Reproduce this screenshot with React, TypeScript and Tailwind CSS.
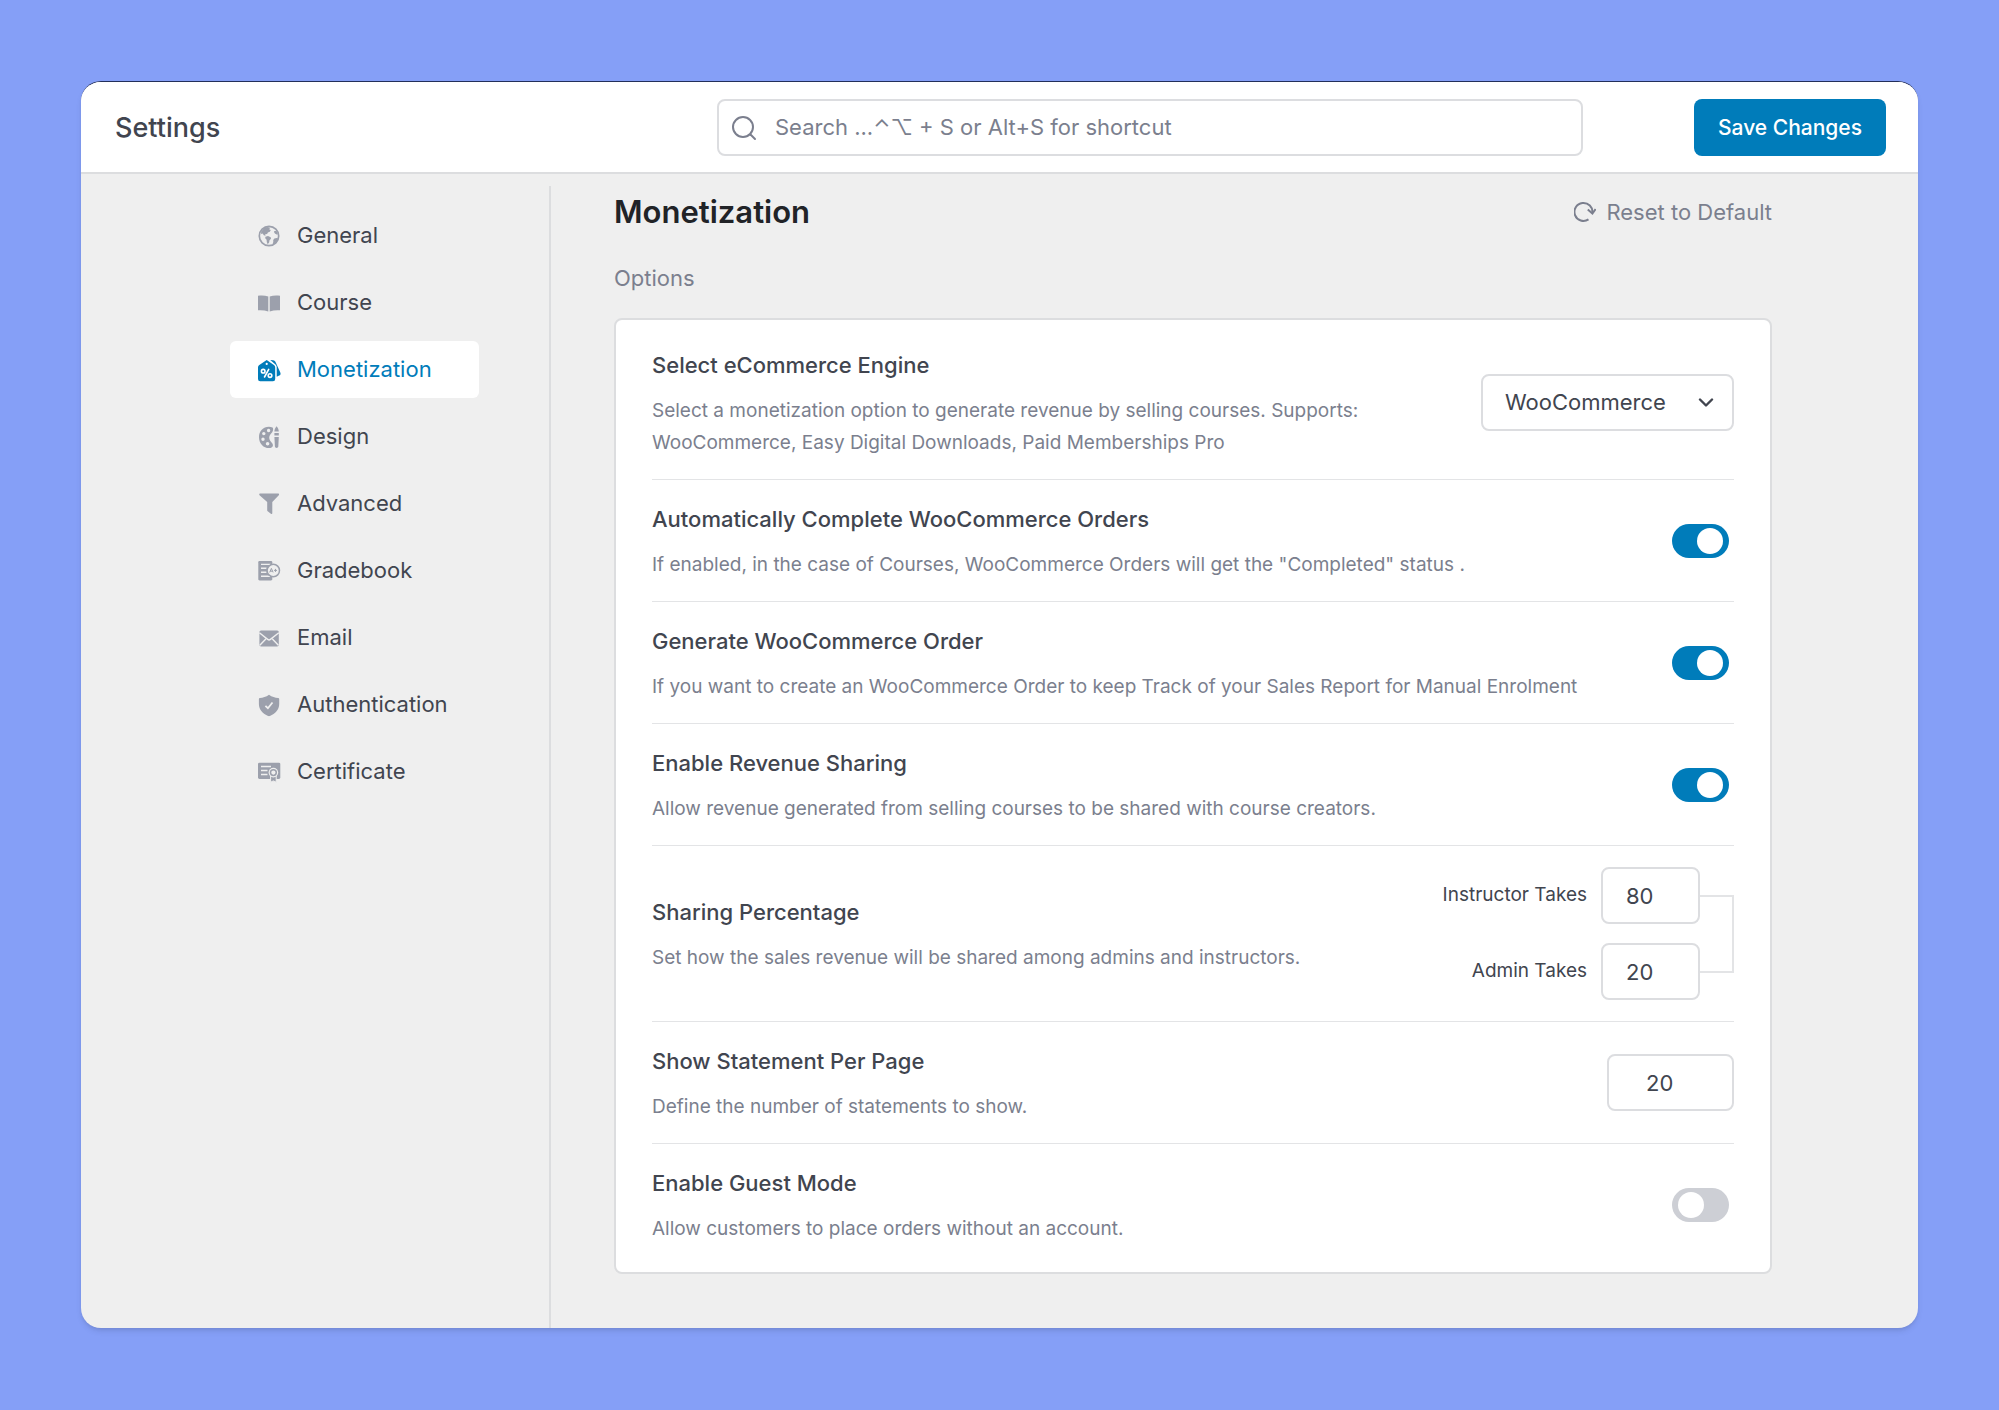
import React, { useState } from "react";
import { clsx } from "clsx";

interface IconProps {
  children: React.ReactNode;
}

const Icon: React.FC<IconProps> = ({ children }) => (
  <svg
    width="24"
    height="24"
    viewBox="0 0 24 24"
    fill="currentColor"
    className="shrink-0"
    aria-hidden="true"
  >
    {children}
  </svg>
);

const GlobeIcon = () => (
  <Icon>
    <circle cx="12" cy="12" r="9.7" fill="none" stroke="currentColor" strokeWidth="1.7" />
    <path d="M4.200 7.400 7.200 4l3.400-1 2.400.8-.7 1.600 1.500.7-1 1.700-1.900.6-.8 1.500-1.900.4.3 1.400-1.600-.4L5.600 9.400 4 10Z" />
    <path d="M8.400 12.800 11 12.100l2.700 1.200.3 1.500-1.500 1.400-.4 2.200-1.400 1.800-.9-2.200-.2-2.200-1.400-1.600Z" />
    <path d="m17.400 6.900 2.100.2 1.600 3.100-1.500.3-1.700-1.100-.9-1.400ZM17.400 14.600l2.300-.7 1.400.3-1.300 3.300-3 2.800-1.200-.4.700-1.800-.1-2Z" />
  </Icon>
);

const BookIcon = () => (
  <Icon>
    <path d="M1 4.800c3.600-.6 7-.4 10.300.7v15C8.200 19.400 4.800 19 1 19.300Z" />
    <path d="M23 4.800c-3.600-.6-7-.4-10.300.7v15c3.100-1.100 6.500-1.500 10.300-1.200Z" />
  </Icon>
);

const TagIcon = () => (
  <Icon>
    <path
      fillRule="evenodd"
      d="M9.700 1.900 16.900 7c.9.700 1.300 1.500 1.300 2.600v11.500a2.200 2.200 0 0 1-2.200 2.200H3.200A2.200 2.200 0 0 1 1 21.100V9.600C1 8.500 1.400 7.700 2.300 7Zm0 2.900a1.100 1.100 0 1 0 0 2.200 1.100 1.100 0 0 0 0-2.200Z"
    />
    <path d="m13.200 1.900 3 .4c1 .1 1.700.6 2.200 1.500l4.900 10.600c.6 1.400.2 2.600-1.100 3.200l-2.500 1.100V9.400c0-1.500-.6-2.500-1.800-3.400Z" />
    <g fill="none" stroke="#fff" strokeWidth="1.600" strokeLinecap="round">
      <circle cx="6.200" cy="13.200" r="1.800" />
      <circle cx="13" cy="17.600" r="1.800" />
      <path d="m11.700 11.400-4.200 7.600" />
    </g>
  </Icon>
);

const PaletteIcon = () => (
  <Icon>
    <path
      fillRule="evenodd"
      d="M15.600 2.400C8 0 2 5.200 2 12.200s5.400 11.600 11.200 10.800c2.800-.5 3.400-2.900 2-4.800-1.300-1.700-3-3-3-5.400 0-2.700 1.600-3.700 3-5.600 1-1.500 1.300-3.600.4-4.800ZM11.600 3.800a1.700 1.700 0 1 0 0 3.400 1.700 1.700 0 0 0 0-3.400ZM6.800 6.900a1.700 1.700 0 1 0 0 3.400 1.700 1.700 0 0 0 0-3.400ZM6 12.600a1.700 1.700 0 1 0 0 3.400 1.700 1.700 0 0 0 0-3.400Zm4.600 4.400a1.800 1.800 0 1 0 0 3.600 1.800 1.800 0 0 0 0-3.600Z"
    />
    <path d="M19.600 1.300c1.400 1.800 2.200 3.300 2.200 5.300h-4.400c0-2 .8-3.500 2.200-5.300ZM17.400 8h4.400v2.400h-4.400ZM17.400 12h4.400l-.5 9.500c-.1 1.900-3.300 1.900-3.400 0Z" />
  </Icon>
);

const FunnelIcon = () => (
  <Icon>
    <path d="M3.200 1.600h17.900c.9 0 1.300 1 .7 1.700L15.300 10v11.300c0 .6-.6.9-1.100.6l-3.500-2.600a1 1 0 0 1-.5-.9V10L2.500 3.300C1.900 2.600 2.300 1.600 3.200 1.600Z" />
  </Icon>
);

const GradebookIcon = () => (
  <Icon>
    <path d="M2.600 2h11.200c.8 0 1.500.5 1.500 1.300v17c0 .6-.6 1.100-1.300 1.100H2.600c-.8 0-1.300-.5-1.300-1.200V3.200C1.300 2.500 1.800 2 2.600 2Z" />
    <path d="M4 5.400h9.500M4 9.200h5.500M4 13.200h5.500M4 17.200h9" stroke="#efefef" strokeWidth="1.400" fill="none" />
    <circle cx="16.300" cy="11.500" r="6.200" fill="#efefef" stroke="currentColor" strokeWidth="1.500" />
    <path
      d="m12.700 13.400 1.700-4 1.700 4M13.300 12.200h2.200M17 11.400h3M18.500 9.900v3"
      fill="none"
      stroke="currentColor"
      strokeWidth="1"
    />
  </Icon>
);

const MailIcon = () => (
  <Icon>
    <rect x="2.400" y="4.400" width="19.400" height="16" rx="1.600" />
    <path
      d="m2.400 6.800 8.300 6.600c.9.700 1.800.7 2.700 0l8.400-6.600M2.800 19.200l6-6.300M21.400 19.200l-6-6.300"
      fill="none"
      stroke="#efefef"
      strokeWidth="1.400"
    />
  </Icon>
);

const ShieldIcon = () => (
  <Icon>
    <path d="M12 1.800c3 2.200 6 3 9.200 3.300.6.100 1 .4 1 1v5c0 5.600-4 10-9.300 11.900-.6.200-1.200.2-1.800 0C5.900 21.100 1.900 16.700 1.900 11.100v-5c0-.6.4-.9 1-1C6 4.800 9 4 12 1.800Z" />
    <path d="m8.400 12.800 2.500 2.400 4.600-5.700" fill="none" stroke="#efefef" strokeWidth="1.800" />
  </Icon>
);

const CertificateIcon = () => (
  <Icon>
    <rect x="1" y="2.700" width="22.300" height="16.300" rx="1.400" />
    <path d="M4 6.600h10M4 10.600h6.500M4 14.600h6.500" stroke="#efefef" strokeWidth="1.500" fill="none" />
    <path d="M13.600 15h5.600v7.200l-2.800-1.300-2.800 1.300Z" stroke="#efefef" strokeWidth="1" />
    <circle cx="16.400" cy="12.600" r="4.800" fill="#efefef" />
    <circle cx="16.400" cy="12.600" r="2.900" fill="#efefef" stroke="currentColor" strokeWidth="1.500" />
  </Icon>
);

const navItems = [
  { name: "General", icon: GlobeIcon },
  { name: "Course", icon: BookIcon },
  { name: "Monetization", icon: TagIcon },
  { name: "Design", icon: PaletteIcon },
  { name: "Advanced", icon: FunnelIcon },
  { name: "Gradebook", icon: GradebookIcon },
  { name: "Email", icon: MailIcon },
  { name: "Authentication", icon: ShieldIcon },
  { name: "Certificate", icon: CertificateIcon },
];

interface RowProps {
  title: string;
  description: string;
  htmlFor?: string;
  children: React.ReactNode;
}

const Row: React.FC<RowProps> = ({ title, description, htmlFor, children }) => (
  <div className="flex items-center justify-between gap-6 border-b border-[#e3e4e6] py-5 last:border-b-0">
    <div className="max-w-[940px] pt-1">
      <h3 className="text-[22px] leading-[30px] font-medium text-[#41454f]">
        {htmlFor ? <label htmlFor={htmlFor}>{title}</label> : title}
      </h3>
      <p className="mt-[15px] text-[19px] leading-8 whitespace-pre-line text-[#7b7f8e]">
        {description}
      </p>
    </div>
    {children}
  </div>
);

interface ToggleProps {
  id: string;
  defaultChecked?: boolean;
}

const Toggle: React.FC<ToggleProps> = ({ id, defaultChecked }) => (
  <input
    id={id}
    type="checkbox"
    role="switch"
    defaultChecked={defaultChecked}
    className="mr-[5px] h-[34px] w-[57px] shrink-0 cursor-pointer appearance-none rounded-full bg-[#cdcfd5] px-1.5 py-1 before:block before:size-[26px] before:rounded-full before:bg-white checked:bg-[#007cba] checked:before:ml-auto"
  />
);

const inputClass =
  "h-[57px] rounded-lg border-2 border-[#dcdde0] bg-white text-[22px] text-[#41454f] outline-none";

const App: React.FC = () => {
  const [active, setActive] = useState("Monetization");

  return (
    <div className="flex min-h-screen flex-col bg-[#859ff7] px-[81px] pt-[81px] pb-[82px] font-['Inter','Liberation_Sans',sans-serif]">
      <div className="flex flex-1 flex-col overflow-hidden rounded-[20px] border-t border-[#232f5a] bg-[#efefef] shadow-md">
        {/* Top bar */}
        <header className="grid grid-cols-[602fr_866fr_303fr] items-center border-b-2 border-[#dcdddf] bg-white pt-[17px] pr-8 pb-4 pl-[34px]">
          <h1 className="text-[27px] leading-8 font-medium text-[#41454f]">Settings</h1>
          <label className="flex h-[57px] items-center gap-[18px] rounded-lg border-2 border-[#dcdde0] bg-white px-3">
            <svg
              width="26"
              height="26"
              viewBox="0 0 26 26"
              fill="none"
              stroke="#7b7f8e"
              strokeWidth="2"
              strokeLinecap="round"
              className="shrink-0"
              aria-hidden="true"
            >
              <circle cx="12" cy="12" r="10" />
              <path d="m19.500 19.500 4.500 4.500" />
            </svg>
            <input
              type="search"
              aria-label="Search settings"
              placeholder="Search ...⌃⌥ + S or Alt+S for shortcut"
              className="w-full bg-transparent text-[22px] text-[#41454f] outline-none placeholder:text-[#7b7f8e]"
            />
          </label>
          <button
            type="button"
            className="h-[57px] justify-self-end rounded-lg bg-[#007cba] px-6 text-[21px] font-medium text-white"
          >
            Save Changes
          </button>
        </header>

        <div className="flex flex-1 pt-3">
          {/* Sidebar */}
          <aside className="w-[470px] shrink-0 border-r-2 border-[#dcdddf] pt-[21px] pr-[70px] pl-[149px]">
            <nav className="flex flex-col gap-[10px]">
              {navItems.map((item) => (
                <a
                  key={item.name}
                  href={`#${item.name.toLowerCase()}`}
                  onClick={() => setActive(item.name)}
                  className={clsx(
                    "flex h-[57px] items-center gap-4 rounded-md pl-[27px] text-[22px]",
                    active === item.name ? "bg-white text-[#007cba]" : "text-[#9ca0ac]"
                  )}
                >
                  <item.icon />
                  <span className={active === item.name ? "" : "text-[#41454f]"}>
                    {item.name}
                  </span>
                </a>
              ))}
            </nav>
          </aside>

          {/* Content */}
          <main className="min-w-0 flex-1 pt-1 pr-[146px] pb-[53px] pl-[63px]">
            <div className="flex items-center justify-between">
              <h2 className="text-[31px] leading-[44px] font-semibold text-[#212327]">
                Monetization
              </h2>
              <button type="button" className="flex items-center gap-[10px] text-[22px] text-[#7b7f8e]">
                <svg
                  width="22"
                  height="22"
                  viewBox="0 0 22 22"
                  fill="none"
                  stroke="currentColor"
                  strokeWidth="2"
                  aria-hidden="true"
                >
                  <path d="M14.500 18.400A9 9 0 1 1 18.400 12" />
                  <path d="m13.800 8.600 4.600 4 3.200-4.600" />
                </svg>
                Reset to Default
              </button>
            </div>
            <h3 className="mt-7 text-[22px] leading-8 text-[#7b7f8e]">Options</h3>

            <div className="mt-6 rounded-lg border-2 border-[#dcdddf] bg-white px-9 pt-[6px] pb-[7px]">
              <Row
                title="Select eCommerce Engine"
                description={
                  "Select a monetization option to generate revenue by selling courses. Supports:\nWooCommerce, Easy Digital Downloads, Paid Memberships Pro"
                }
                htmlFor="engine"
              >
                <div className="relative w-[253px] shrink-0">
                  <select
                    id="engine"
                    defaultValue="WooCommerce"
                    className={clsx(inputClass, "w-full appearance-none pr-14 pl-[22px]")}
                  >
                    <option>WooCommerce</option>
                    <option>Easy Digital Downloads</option>
                    <option>Paid Memberships Pro</option>
                  </select>
                  <svg
                    width="16"
                    height="10"
                    viewBox="0 0 16 10"
                    fill="none"
                    stroke="#41454f"
                    strokeWidth="2.400"
                    strokeLinecap="round"
                    strokeLinejoin="round"
                    className="pointer-events-none absolute top-6 right-5"
                    aria-hidden="true"
                  >
                    <path d="m2 1.500 6 6 6-6" />
                  </svg>
                </div>
              </Row>

              <Row
                title="Automatically Complete WooCommerce Orders"
                description={'If enabled, in the case of Courses, WooCommerce Orders will get the "Completed" status .'}
                htmlFor="auto-complete"
              >
                <Toggle id="auto-complete" defaultChecked />
              </Row>

              <Row
                title="Generate WooCommerce Order"
                description="If you want to create an WooCommerce Order to keep Track of your Sales Report for Manual Enrolment"
                htmlFor="generate-order"
              >
                <Toggle id="generate-order" defaultChecked />
              </Row>

              <Row
                title="Enable Revenue Sharing"
                description="Allow revenue generated from selling courses to be shared with course creators."
                htmlFor="revenue-sharing"
              >
                <Toggle id="revenue-sharing" defaultChecked />
              </Row>

              <div className="flex items-center justify-between border-b border-[#e3e4e6] py-[21px]">
                <div className="pt-1">
                  <h3 className="text-[22px] leading-[30px] font-medium text-[#41454f]">
                    Sharing Percentage
                  </h3>
                  <p className="mt-[15px] text-[19px] leading-8 text-[#7b7f8e]">
                    Set how the sales revenue will be shared among admins and instructors.
                  </p>
                </div>
                <div className="flex items-center">
                  <div className="flex flex-col items-end gap-[19px]">
                    <label className="flex items-center gap-[14px] text-[19px] text-[#41454f]">
                      Instructor Takes
                      <input
                        type="text"
                        inputMode="numeric"
                        defaultValue="80"
                        className={clsx(inputClass, "w-[99px] px-[23px]")}
                      />
                    </label>
                    <label className="flex items-center gap-[14px] text-[19px] text-[#41454f]">
                      Admin Takes
                      <input
                        type="text"
                        inputMode="numeric"
                        defaultValue="20"
                        className={clsx(inputClass, "w-[99px] px-[23px]")}
                      />
                    </label>
                  </div>
                  {/* Bracket joining the two shares */}
                  <div className="h-[78px] w-[34px] border-y-2 border-r-2 border-[#e3e4e6]" />
                </div>
              </div>

              <Row
                title="Show Statement Per Page"
                description="Define the number of statements to show."
                htmlFor="per-page"
              >
                <input
                  id="per-page"
                  type="text"
                  inputMode="numeric"
                  defaultValue="20"
                  className={clsx(inputClass, "w-[127px] pr-4 pl-[37px]")}
                />
              </Row>

              <Row
                title="Enable Guest Mode"
                description="Allow customers to place orders without an account."
                htmlFor="guest-mode"
              >
                <Toggle id="guest-mode" />
              </Row>
            </div>
          </main>
        </div>
      </div>
    </div>
  );
};

export default App;
